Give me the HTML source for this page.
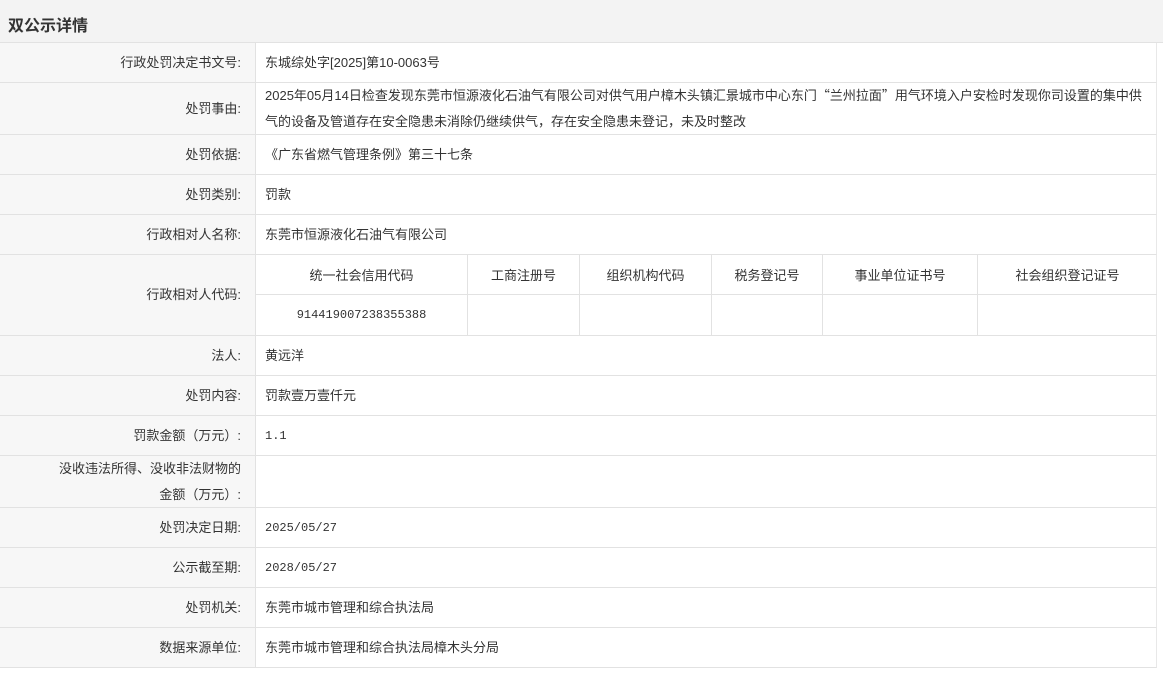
<!DOCTYPE html>
<html><head><meta charset="utf-8"><style>
*{margin:0;padding:0;box-sizing:border-box}
body{width:1163px;height:674px;background:#fff;font-family:"Liberation Sans","Noto Sans CJK SC","WenQuanYi Zen Hei",sans-serif;font-size:13px;color:#333;position:relative;overflow:hidden}
.hd{position:absolute;left:0;top:0;width:1163px;height:43px;background:#f3f3f3;font-size:16px;font-weight:bold;color:#333;padding:12px 0 0 8px;border-bottom:1px solid #e2e2e2}
.row{position:absolute;left:0;width:1157px;border-bottom:1px solid #e2e2e2;border-right:1px solid #e8e8e8}
.lb{position:absolute;left:0;top:0;bottom:0;width:256px;background:#f7f7f7;border-right:1px solid #e2e2e2;text-align:right;padding-right:14px;display:flex;align-items:center;justify-content:flex-end;line-height:26px}
.vl{position:absolute;left:265px;top:0;bottom:0;right:0;display:flex;align-items:center;line-height:26px}
.mono{font-family:"Liberation Mono","Noto Sans CJK SC",monospace;font-size:12px}
.cjk{font-family:"Noto Sans CJK SC",sans-serif}
.sub{position:absolute;top:0;height:40px;border-right:1px solid #e2e2e2;border-bottom:1px solid #e2e2e2;display:flex;align-items:center;justify-content:center}
</style></head><body>
<div class="hd">双公示详情</div>
<div class="row" style="top:43px;height:40px"><div class="lb">行政处罚决定书文号:</div><div class="vl">东城综处字[2025]第10-0063号</div></div>
<div class="row" style="top:83px;height:52px"><div class="lb">处罚事由:</div><div class="vl" style="width:885px;right:auto"><span>2025年05月14日检查发现东莞市恒源液化石油气有限公司对供气用户樟木头镇汇景城市中心东门<span class="cjk">“</span>兰州拉面<span class="cjk">”</span>用气环境入户安检时发现你司设置的集中供气的设备及管道存在安全隐患未消除仍继续供气，存在安全隐患未登记，未及时整改</span></div></div>
<div class="row" style="top:135px;height:40px"><div class="lb">处罚依据:</div><div class="vl">《广东省燃气管理条例》第三十七条</div></div>
<div class="row" style="top:175px;height:40px"><div class="lb">处罚类别:</div><div class="vl">罚款</div></div>
<div class="row" style="top:215px;height:40px"><div class="lb">行政相对人名称:</div><div class="vl">东莞市恒源液化石油气有限公司</div></div>
<div class="row" style="top:255px;height:81px"><div class="lb">行政相对人代码:</div>
<div class="sub" style="left:256px;width:212px">统一社会信用代码</div>
<div class="sub" style="left:468px;width:112px">工商注册号</div>
<div class="sub" style="left:580px;width:132px">组织机构代码</div>
<div class="sub" style="left:712px;width:111px">税务登记号</div>
<div class="sub" style="left:823px;width:155px">事业单位证书号</div>
<div class="sub" style="left:978px;width:179px;border-right:none">社会组织登记证号</div>
<div class="sub mono" style="top:40px;left:256px;width:212px;border-bottom:none">914419007238355388</div>
<div class="sub" style="top:40px;left:468px;width:112px;border-bottom:none"></div>
<div class="sub" style="top:40px;left:580px;width:132px;border-bottom:none"></div>
<div class="sub" style="top:40px;left:712px;width:111px;border-bottom:none"></div>
<div class="sub" style="top:40px;left:823px;width:155px;border-bottom:none"></div>
</div>
<div class="row" style="top:336px;height:40px"><div class="lb">法人:</div><div class="vl">黄远洋</div></div>
<div class="row" style="top:376px;height:40px"><div class="lb">处罚内容:</div><div class="vl">罚款壹万壹仟元</div></div>
<div class="row" style="top:416px;height:40px"><div class="lb">罚款金额（万元）:</div><div class="vl mono">1.1</div></div>
<div class="row" style="top:456px;height:52px"><div class="lb" style="padding-left:50px">没收违法所得、没收非法财物的金额（万元）:</div><div class="vl"></div></div>
<div class="row" style="top:508px;height:40px"><div class="lb">处罚决定日期:</div><div class="vl mono">2025/05/27</div></div>
<div class="row" style="top:548px;height:40px"><div class="lb">公示截至期:</div><div class="vl mono">2028/05/27</div></div>
<div class="row" style="top:588px;height:40px"><div class="lb">处罚机关:</div><div class="vl">东莞市城市管理和综合执法局</div></div>
<div class="row" style="top:628px;height:40px"><div class="lb">数据来源单位:</div><div class="vl">东莞市城市管理和综合执法局樟木头分局</div></div>
</body></html>
